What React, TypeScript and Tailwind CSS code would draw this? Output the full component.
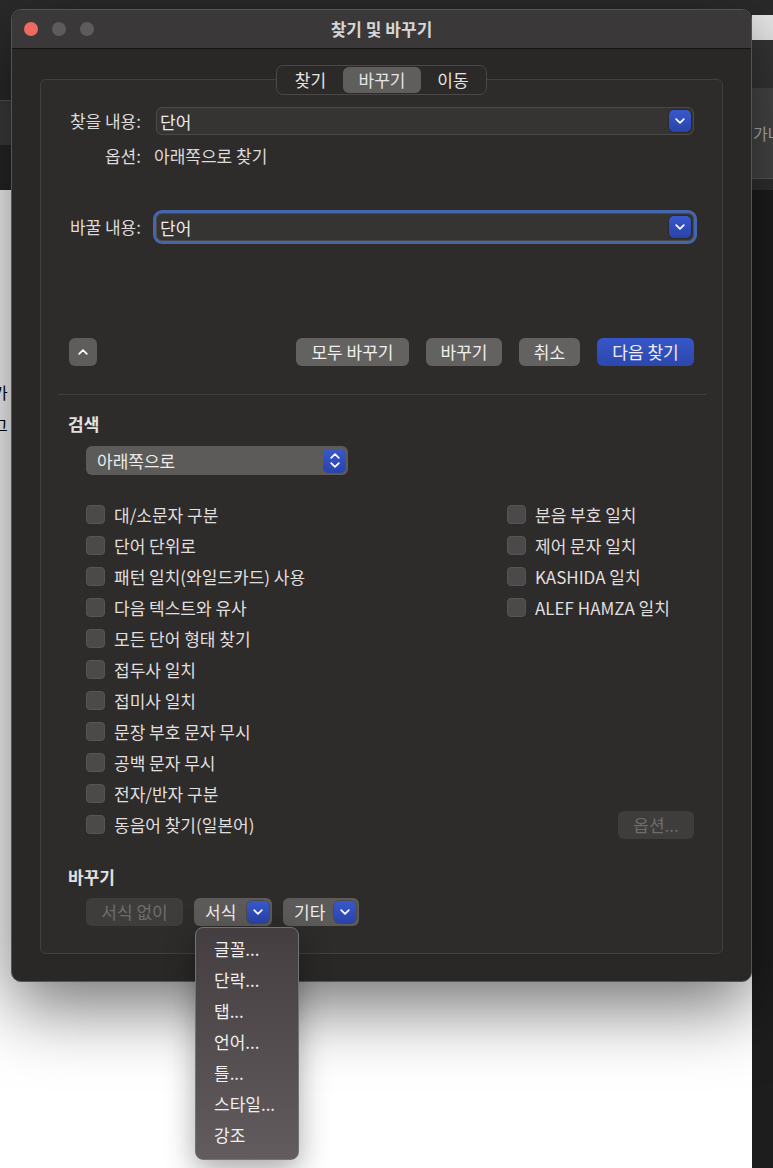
import React from "react";

const font = "font-['Noto_Sans_CJK_KR','Noto_Sans',sans-serif]";

function Chevron({ dir = "down" }: { dir?: "down" | "up" }) {
  return (
    <svg width="10" height="6" viewBox="0 0 10 6" fill="none">
      <path
        d={dir === "down" ? "M1.2 1.2L5 4.8l3.8-3.6" : "M1.2 4.8L5 1.2l3.8 3.6"}
        stroke="white"
        strokeWidth="1.7"
        strokeLinecap="round"
        strokeLinejoin="round"
      />
    </svg>
  );
}

function BlueBtn() {
  return (
    <div className="w-[22px] h-[22px] rounded-[5px] bg-gradient-to-b from-[#3858cc] to-[#2a43aa] flex items-center justify-center shadow-[0_0_0_0.5px_rgba(0,0,0,0.4)]">
      <Chevron />
    </div>
  );
}

function Combo({ focused = false }: { focused?: boolean }) {
  return (
    <div
      className={`flex-1 h-[28px] rounded-[6px] bg-[#363433] border border-[#4c4a49] flex items-center pl-[3px] pr-[2px] ${
        focused ? "ring-[3px] ring-[#4566aa]" : ""
      }`}
    >
      <span className="flex-1 text-[17px] text-[#ebebeb] leading-none">단어</span>
      <BlueBtn />
    </div>
  );
}

function Button({ label, width, blue = false }: { label: string; width: string; blue?: boolean }) {
  return (
    <div
      className={`${width} h-[28px] rounded-[6px] flex items-center justify-center text-[17px] text-[#efefef] ${
        blue ? "bg-gradient-to-b from-[#3657c9] to-[#2c47ad]" : "bg-[#646261]"
      }`}
    >
      {label}
    </div>
  );
}

function Check({ label }: { label: string }) {
  return (
    <div className="h-[31px] flex items-center gap-[9px]">
      <div className="w-[19px] h-[19px] rounded-[4px] bg-[#4b4949] border border-[#575554]" />
      <span className="text-[17px] text-[#e0dfdf] leading-none">{label}</span>
    </div>
  );
}

export default function App() {
  const leftChecks = [
    "대/소문자 구분",
    "단어 단위로",
    "패턴 일치(와일드카드) 사용",
    "다음 텍스트와 유사",
    "모든 단어 형태 찾기",
    "접두사 일치",
    "접미사 일치",
    "문장 부호 문자 무시",
    "공백 문자 무시",
    "전자/반자 구분",
    "동음어 찾기(일본어)",
  ];
  const rightChecks = ["분음 부호 일치", "제어 문자 일치", "KASHIDA 일치", "ALEF HAMZA 일치"];
  const menuItems = ["글꼴...", "단락...", "탭...", "언어...", "틀...", "스타일...", "강조"];

  return (
    <div className={`relative w-[773px] h-[1168px] overflow-hidden bg-white ${font}`}>
      {/* background app */}
      <div className="flex flex-col h-full">
        <div className="flex h-[190px]">
          <div className="flex-1 flex flex-col">
            <div className="h-[100px] bg-[#2a2a2a]" />
            <div className="h-[45px] bg-[#3c3c3c] border-t border-[#555]" />
            <div className="h-[45px] bg-[#262626]" />
          </div>
          <div className="w-[21px] flex flex-col">
            <div className="h-[15px] bg-[#2a2a2a]" />
            <div className="h-[25px] bg-[#e9e9e9]" />
            <div className="h-[48px] bg-[#353535]" />
            <div className="h-[90px] bg-[#474747] flex items-center overflow-hidden">
              <span className="text-[16px] text-[#b5b5b5] whitespace-nowrap pl-[1px]">가나</span>
            </div>
            <div className="h-[12px] bg-[#303030] border-t border-[#5a5a5a]" />
          </div>
        </div>
        <div className="flex flex-1">
          <div className="flex-1 bg-white flex flex-col pt-[194px] overflow-hidden">
            <span className="text-[16px] text-black leading-none -ml-[7px]">가</span>
            <span className="text-[16px] text-black leading-none -ml-[7px] mt-[17px]">그</span>
          </div>
          <div className="w-[21px] bg-[#1d1d1d]" />
        </div>
      </div>

      {/* dialog window */}
      <div className="absolute left-[11px] top-[9px] w-[741px] h-[973px] rounded-[10px] bg-[#2a2827] border border-[#565453] shadow-[0_25px_70px_rgba(0,0,0,0.55)] flex flex-col">
        <div className="h-[39px] rounded-t-[10px] bg-[#3a3838] border-b border-[#151414] grid grid-cols-[1fr_auto_1fr] items-center">
          <div className="flex gap-[14px] pl-[12px]">
            <div className="w-[14px] h-[14px] rounded-full bg-[#ec6a5e]" />
            <div className="w-[14px] h-[14px] rounded-full bg-[#5e5c5b]" />
            <div className="w-[14px] h-[14px] rounded-full bg-[#5e5c5b]" />
          </div>
          <div className="text-[17px] font-bold text-[#d6d5d5]">찾기 및 바꾸기</div>
          <div />
        </div>

        <div className="pt-[30px] px-[28px]">
          <div className="h-[875px] rounded-[6px] border border-[#42403f] bg-[#2e2c2b] flex flex-col">
            {/* segmented */}
            <div className="-mt-[15px] flex justify-center">
              <div className="h-[30px] w-[211px] rounded-[7px] border border-[#4a4847] bg-[#2c2a29] flex items-center p-[1px] text-[17px] text-[#e4e4e4]">
                <div className="w-[65px] text-center">찾기</div>
                <div className="w-[78px] h-full rounded-[6px] bg-[#605e5d] flex items-center justify-center">바꾸기</div>
                <div className="flex-1 text-center">이동</div>
              </div>
            </div>

            {/* find */}
            <div className="mt-[12px] flex items-center pl-[26px] pr-[28px] gap-[15px]">
              <div className="w-[74px] text-right text-[17px] text-[#dcdbdb] whitespace-nowrap">찾을 내용:</div>
              <Combo />
            </div>
            <div className="mt-[11px] h-[20px] flex items-center pl-[26px] gap-[13px] text-[17px] text-[#dcdbdb]">
              <div className="w-[74px] text-right">옵션:</div>
              <div>아래쪽으로 찾기</div>
            </div>

            {/* replace */}
            <div className="mt-[47px] flex items-center pl-[26px] pr-[28px] gap-[15px]">
              <div className="w-[74px] text-right text-[17px] text-[#dcdbdb] whitespace-nowrap">바꿀 내용:</div>
              <Combo focused />
            </div>

            {/* buttons */}
            <div className="mt-[97px] flex items-center pl-[28px] pr-[28px]">
              <div className="w-[28px] h-[28px] rounded-[6px] bg-[#5f5d5c] flex items-center justify-center">
                <Chevron dir="up" />
              </div>
              <div className="flex-1" />
              <div className="flex gap-[17px]">
                <Button label="모두 바꾸기" width="w-[113px]" />
                <Button label="바꾸기" width="w-[76px]" />
                <Button label="취소" width="w-[61px]" />
                <Button label="다음 찾기" width="w-[97px]" blue />
              </div>
            </div>

            <div className="mt-[28px] ml-[17px] mr-[16px] h-px bg-[#403e3d]" />

            <div className="mt-[19px] h-[20px] pl-[27px] text-[17px] font-bold text-[#e2e1e1] leading-[20px]">검색</div>

            <div className="mt-[12px] ml-[45px] w-[262px] h-[29px] rounded-[6px] bg-[#5d5b5a] flex items-center pl-[11px] pr-[2px]">
              <span className="flex-1 text-[17px] text-[#ebebeb]">아래쪽으로</span>
              <div className="w-[23px] h-[24px] rounded-[5px] bg-gradient-to-b from-[#3858cc] to-[#2a43aa] flex flex-col items-center justify-center gap-[3px]">
                <Chevron dir="up" />
                <Chevron />
              </div>
            </div>

            {/* checkboxes */}
            <div className="mt-[24px] flex pl-[45px]">
              <div className="w-[421px] flex flex-col">
                {leftChecks.map((c) => (
                  <Check key={c} label={c} />
                ))}
              </div>
              <div className="flex-1 flex flex-col pr-[28px]">
                {rightChecks.map((c) => (
                  <Check key={c} label={c} />
                ))}
                <div className="flex-1" />
                <div className="h-[31px] flex items-center justify-end">
                  <div className="w-[76px] h-[28px] rounded-[6px] bg-[#3f3d3c] text-[17px] text-[#6e6c6b] flex items-center justify-center">
                    옵션...
                  </div>
                </div>
              </div>
            </div>

            <div className="mt-[27px] h-[20px] pl-[27px] text-[17px] font-bold text-[#e2e1e1] leading-[20px]">바꾸기</div>

            <div className="mt-[11px] ml-[45px] flex gap-[11px]">
              <div className="w-[97px] h-[28px] rounded-[6px] bg-[#3f3d3c] text-[17px] text-[#6e6c6b] flex items-center justify-center">
                서식 없이
              </div>
              <div className="w-[78px] h-[28px] rounded-[6px] bg-[#5d5b5a] flex items-center pl-[11px] pr-[3px]">
                <span className="flex-1 text-[17px] text-[#ebebeb]">서식</span>
                <BlueBtn />
              </div>
              <div className="w-[76px] h-[28px] rounded-[6px] bg-[#5d5b5a] flex items-center pl-[11px] pr-[3px]">
                <span className="flex-1 text-[17px] text-[#ebebeb]">기타</span>
                <BlueBtn />
              </div>
            </div>
          </div>
        </div>
      </div>

      {/* popup menu */}
      <div className="absolute left-[195px] top-[927px] w-[104px] h-[233px] rounded-[8px] border border-[#767173] bg-gradient-to-b from-[#443e40] to-[#625c5e] shadow-[0_10px_30px_rgba(0,0,0,0.35)] pt-[5px] flex flex-col">
        {menuItems.map((m) => (
          <div key={m} className="h-[31px] flex items-center pl-[18px] text-[17px] text-[#efefef]">
            {m}
          </div>
        ))}
      </div>
    </div>
  );
}
